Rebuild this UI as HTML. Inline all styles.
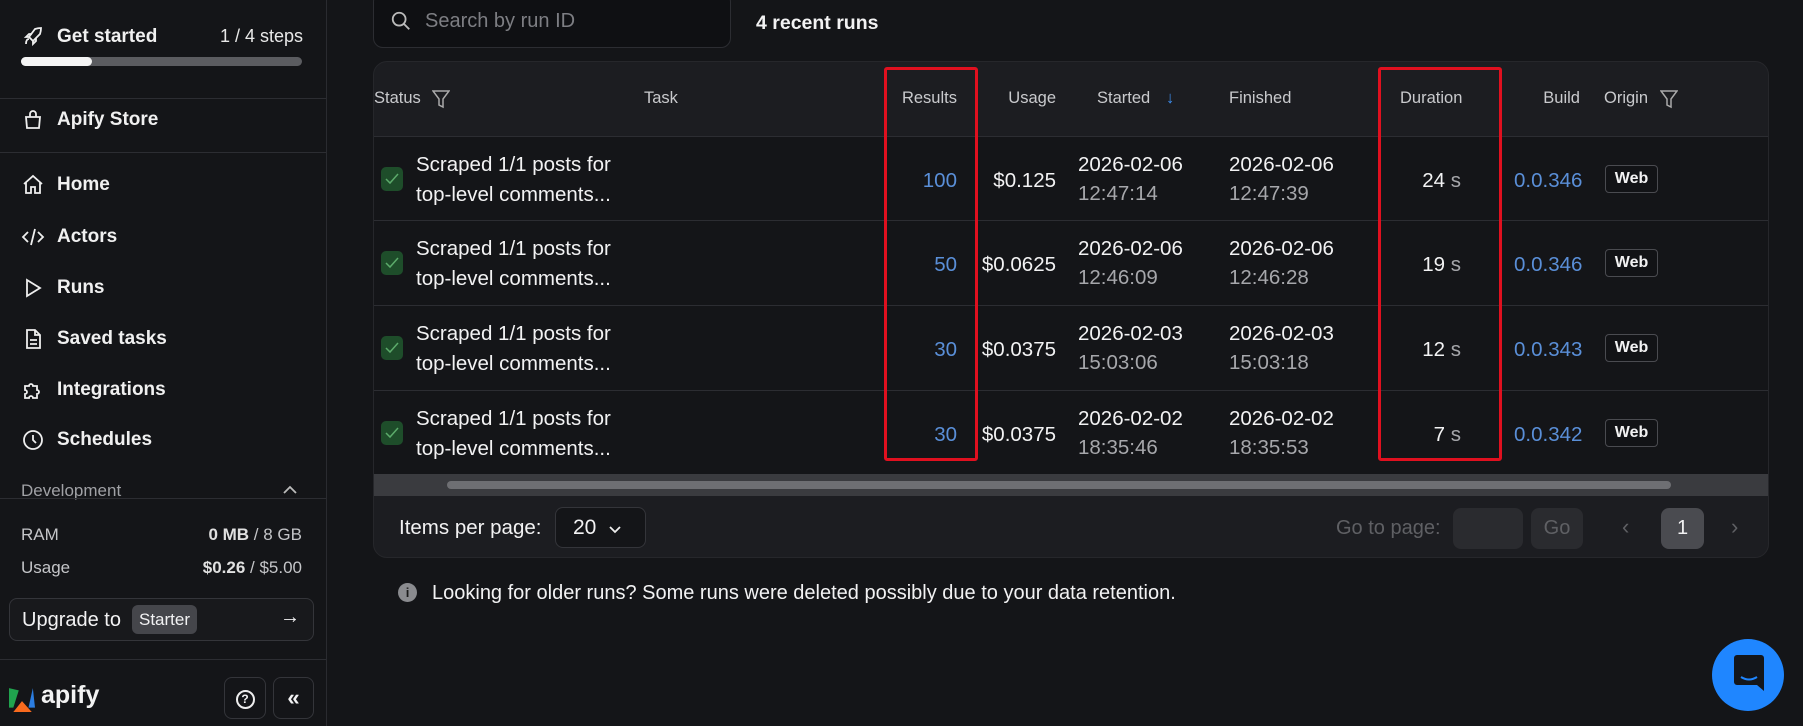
<!DOCTYPE html>
<html><head><meta charset="utf-8"><style>
*{box-sizing:border-box;margin:0;padding:0}
body{width:1803px;height:726px;background:#141518;font-family:"Liberation Sans",sans-serif;color:#f2f2f3;position:relative;overflow:hidden}
.a{position:absolute;white-space:nowrap}
.side{position:absolute;left:0;top:0;width:327px;height:726px;background:#141518;border-right:1px solid #2a2b30}
.hr{position:absolute;left:0;width:326px;height:1px;background:#2c2d32}
.nav{position:absolute;left:57px;font-size:19px;font-weight:bold;color:#f0f0f0;line-height:22px}
.ic{position:absolute;left:21px;width:24px;height:24px}
.card{position:absolute;left:373px;top:61px;width:1396px;height:497px;background:#1c1d21;border-radius:14px;border:1px solid #26272b;overflow:hidden}
.row{position:absolute;left:0;width:1396px;height:85px;background:#141518;border-top:1px solid #2c2d32}
.th{position:absolute;top:27px;font-size:16.5px;color:#c9cacd}
.t{position:absolute;font-size:20.5px;color:#f2f2f3;line-height:23px}
.sub{color:#a6a7ab}
.blue{color:#5a8fd8}
.chk{position:absolute;left:7px;top:30px;width:22px;height:24px;background:#1e4d2a;border-radius:5px}
.web{position:absolute;left:1231px;top:28px;width:53px;height:28px;border:1px solid #4a4b50;border-radius:4px;font-size:16px;font-weight:bold;text-align:center;line-height:26px;background:#121316}
.red{position:absolute;border:3px solid #e0101f;border-radius:3px}
</style></head><body>
<div class="side">
 <svg class="ic" style="top:25px" viewBox="0 0 24 24" fill="none" stroke="#eee" stroke-width="1.8"><path d="M5 19c0-3 1-5 3-5M14 4c3-1 6-1 6-1s0 3-1 6l-7 7-4-4 6-8zM8 12l-3 0 3-3h3M12 16v3l3-3v-3"/></svg>
 <div class="nav" style="top:26px">Get started</div>
 <div class="a" style="left:220px;top:26px;font-size:18px;color:#e8e8e8">1 / 4 steps</div>
 <div class="a" style="left:21px;top:57px;width:281px;height:9px;border-radius:5px;background:#5b5c60"></div>
 <div class="a" style="left:21px;top:57px;width:71px;height:9px;border-radius:5px;background:#f4f4f4"></div>
 <div class="hr" style="top:98px"></div>
 <svg class="ic" style="top:108px" viewBox="0 0 24 24" fill="none" stroke="#eee" stroke-width="1.8"><path d="M5 9h14l-1 11H6L5 9zM9 9V6a3 3 0 0 1 6 0v3"/></svg>
 <div class="nav" style="top:109px">Apify Store</div>
 <div class="hr" style="top:152px"></div>
 <svg class="ic" style="top:173px" viewBox="0 0 24 24" fill="none" stroke="#eee" stroke-width="1.8"><path d="M3 11l9-8 9 8M5 9v11h5v-6h4v6h5V9"/></svg>
 <div class="nav" style="top:174px">Home</div>
 <svg class="ic" style="top:225px" viewBox="0 0 24 24" fill="none" stroke="#eee" stroke-width="1.8"><path d="M7 7l-5 5 5 5M17 7l5 5-5 5M14 4l-4 16"/></svg>
 <div class="nav" style="top:226px">Actors</div>
 <svg class="ic" style="top:276px" viewBox="0 0 24 24" fill="none" stroke="#eee" stroke-width="1.8"><path d="M6 4l13 8-13 8z"/></svg>
 <div class="nav" style="top:277px">Runs</div>
 <svg class="ic" style="top:327px" viewBox="0 0 24 24" fill="none" stroke="#eee" stroke-width="1.8"><path d="M6 3h8l5 5v13H6zM14 3v5h5M9 13h7M9 17h7"/></svg>
 <div class="nav" style="top:328px">Saved tasks</div>
 <svg class="ic" style="top:378px" viewBox="0 0 24 24" fill="none" stroke="#eee" stroke-width="1.8"><path d="M4 8h4a2 2 0 1 1 4 0h4v4a2 2 0 1 1 0 4v4h-4a2 2 0 1 0-4 0H4v-4a2 2 0 1 0 0-4z"/></svg>
 <div class="nav" style="top:379px">Integrations</div>
 <svg class="ic" style="top:428px" viewBox="0 0 24 24" fill="none" stroke="#eee" stroke-width="1.8"><circle cx="12" cy="12" r="9"/><path d="M12 7v5l3 3"/></svg>
 <div class="nav" style="top:429px">Schedules</div>
 <div class="a" style="left:21px;top:481px;font-size:17px;color:#a0a1a5">Development</div>
 <svg class="a" style="left:282px;top:484px" width="16" height="12" viewBox="0 0 16 12" fill="none" stroke="#bbb" stroke-width="1.8"><path d="M2 9l6-6 6 6"/></svg>
 <div class="hr" style="top:498px"></div>
 <div class="a" style="left:21px;top:525px;font-size:17px;color:#c4c5c8">RAM</div>
 <div class="a" style="left:200px;top:525px;width:102px;text-align:right;font-size:17px;color:#c4c5c8"><b style="color:#e0e0e0">0 MB</b> / 8 GB</div>
 <div class="a" style="left:21px;top:558px;font-size:17px;color:#c4c5c8">Usage</div>
 <div class="a" style="left:160px;top:558px;width:142px;text-align:right;font-size:17px;color:#c4c5c8"><b style="color:#e0e0e0">$0.26</b> / $5.00</div>
 <div class="a" style="left:9px;top:598px;width:305px;height:43px;border:1px solid #34353a;border-radius:8px;background:#18191c"></div>
 <div class="a" style="left:22px;top:609px;font-size:20px">Upgrade to</div>
 <div class="a" style="left:132px;top:605px;width:65px;height:29px;background:#45464b;border-radius:6px;font-size:17px;line-height:29px;text-align:center">Starter</div>
 <div class="a" style="left:280px;top:606px;font-size:20px">→</div>
 <div class="hr" style="top:659px"></div>
 <svg class="a" style="left:9px;top:686px" width="26" height="26" viewBox="0 0 24 24"><path d="M0 2l9 2-5 16H0z" fill="#20a34e"/><path d="M22 2l2 18h-6z" fill="#2b7de0"/><path d="M4 24l8-10 9 10z" fill="#f86a1e"/></svg>
 <div class="a" style="left:41px;top:681px;font-size:25px;font-weight:bold;color:#f2f2f2">apify</div>
 <div class="a" style="left:224px;top:677px;width:42px;height:42px;border:1px solid #34353a;border-radius:8px;text-align:center;line-height:40px;font-size:18px"><span style="display:inline-block;width:19px;height:19px;border:2px solid #eee;border-radius:50%;font-size:12px;line-height:15px;font-weight:bold;vertical-align:middle">?</span></div>
 <div class="a" style="left:273px;top:677px;width:41px;height:42px;border:1px solid #34353a;border-radius:8px;text-align:center;line-height:40px;font-size:22px;font-weight:bold">«</div>
</div>

<div class="a" style="left:373px;top:-8px;width:358px;height:56px;border:1px solid #2c2d32;border-radius:10px;background:#0f1013"></div>
<svg class="a" style="left:390px;top:10px" width="22" height="22" viewBox="0 0 24 24" fill="none" stroke="#bbb" stroke-width="2"><circle cx="10" cy="10" r="7"/><path d="M15 15l6 6"/></svg>
<div class="a" style="left:425px;top:10px;font-size:20px;color:#7d7e83">Search by run ID</div>
<div class="a" style="left:756px;top:12px;font-size:19.5px;font-weight:bold">4 recent runs</div>

<div class="card">
 <div class="th" style="left:0">Status</div>
 <svg class="a" style="left:58px;top:27px" width="18" height="20" viewBox="0 0 18 20" fill="none" stroke="#aaa" stroke-width="1.5"><path d="M1 2h16l-6 8v8l-4-2v-6z"/></svg>
 <div class="th" style="left:270px">Task</div>
 <div class="th" style="left:500px;width:83px;text-align:right">Results</div>
 <div class="th" style="left:600px;width:82px;text-align:right">Usage</div>
 <div class="th" style="left:723px">Started</div>
 <div class="th" style="left:792px;color:#3d8ef0">↓</div>
 <div class="th" style="left:855px">Finished</div>
 <div class="th" style="left:1026px">Duration</div>
 <div class="th" style="left:1140px;width:66px;text-align:right">Build</div>
 <div class="th" style="left:1230px">Origin</div>
 <svg class="a" style="left:1286px;top:27px" width="18" height="20" viewBox="0 0 18 20" fill="none" stroke="#aaa" stroke-width="1.5"><path d="M1 2h16l-6 8v8l-4-2v-6z"/></svg>

 <div class="row" style="top:74px">
  <div class="chk"><svg width="22" height="24" viewBox="0 0 22 24" fill="none" stroke="#5cab6b" stroke-width="1.5"><path d="M5 12l4 4 8-9"/></svg></div>
  <div class="t" style="left:42px;top:16px">Scraped 1/1 posts for<br><span style="line-height:38px">top-level comments...</span></div>
  <div class="t blue" style="left:500px;top:32px;width:83px;text-align:right">100</div>
  <div class="t" style="left:580px;top:32px;width:102px;text-align:right">$0.125</div>
  <div class="t" style="left:704px;top:16px">2026-02-06</div><div class="t sub" style="left:704px;top:45px">12:47:14</div>
  <div class="t" style="left:855px;top:16px">2026-02-06</div><div class="t sub" style="left:855px;top:45px">12:47:39</div>
  <div class="t" style="left:1020px;top:32px;width:67px;text-align:right">24 <span class="sub">s</span></div>
  <div class="t blue" style="left:1140px;top:32px">0.0.346</div>
  <div class="web">Web</div>
 </div>
 <div class="row" style="top:158px">
  <div class="chk"><svg width="22" height="24" viewBox="0 0 22 24" fill="none" stroke="#5cab6b" stroke-width="1.5"><path d="M5 12l4 4 8-9"/></svg></div>
  <div class="t" style="left:42px;top:16px">Scraped 1/1 posts for<br><span style="line-height:38px">top-level comments...</span></div>
  <div class="t blue" style="left:500px;top:32px;width:83px;text-align:right">50</div>
  <div class="t" style="left:580px;top:32px;width:102px;text-align:right">$0.0625</div>
  <div class="t" style="left:704px;top:16px">2026-02-06</div><div class="t sub" style="left:704px;top:45px">12:46:09</div>
  <div class="t" style="left:855px;top:16px">2026-02-06</div><div class="t sub" style="left:855px;top:45px">12:46:28</div>
  <div class="t" style="left:1020px;top:32px;width:67px;text-align:right">19 <span class="sub">s</span></div>
  <div class="t blue" style="left:1140px;top:32px">0.0.346</div>
  <div class="web">Web</div>
 </div>
 <div class="row" style="top:243px">
  <div class="chk"><svg width="22" height="24" viewBox="0 0 22 24" fill="none" stroke="#5cab6b" stroke-width="1.5"><path d="M5 12l4 4 8-9"/></svg></div>
  <div class="t" style="left:42px;top:16px">Scraped 1/1 posts for<br><span style="line-height:38px">top-level comments...</span></div>
  <div class="t blue" style="left:500px;top:32px;width:83px;text-align:right">30</div>
  <div class="t" style="left:580px;top:32px;width:102px;text-align:right">$0.0375</div>
  <div class="t" style="left:704px;top:16px">2026-02-03</div><div class="t sub" style="left:704px;top:45px">15:03:06</div>
  <div class="t" style="left:855px;top:16px">2026-02-03</div><div class="t sub" style="left:855px;top:45px">15:03:18</div>
  <div class="t" style="left:1020px;top:32px;width:67px;text-align:right">12 <span class="sub">s</span></div>
  <div class="t blue" style="left:1140px;top:32px">0.0.343</div>
  <div class="web">Web</div>
 </div>
 <div class="row" style="top:328px">
  <div class="chk"><svg width="22" height="24" viewBox="0 0 22 24" fill="none" stroke="#5cab6b" stroke-width="1.5"><path d="M5 12l4 4 8-9"/></svg></div>
  <div class="t" style="left:42px;top:16px">Scraped 1/1 posts for<br><span style="line-height:38px">top-level comments...</span></div>
  <div class="t blue" style="left:500px;top:32px;width:83px;text-align:right">30</div>
  <div class="t" style="left:580px;top:32px;width:102px;text-align:right">$0.0375</div>
  <div class="t" style="left:704px;top:16px">2026-02-02</div><div class="t sub" style="left:704px;top:45px">18:35:46</div>
  <div class="t" style="left:855px;top:16px">2026-02-02</div><div class="t sub" style="left:855px;top:45px">18:35:53</div>
  <div class="t" style="left:1020px;top:32px;width:67px;text-align:right">7 <span class="sub">s</span></div>
  <div class="t blue" style="left:1140px;top:32px">0.0.342</div>
  <div class="web">Web</div>
 </div>
 <div class="a" style="left:0;top:412px;width:1396px;height:22px;background:#3a3b3f"></div>
 <div class="a" style="left:73px;top:419px;width:1224px;height:8px;border-radius:4px;background:#6e6f73"></div>
 <div class="a" style="left:25px;top:454px;font-size:20.5px">Items per page:</div>
 <div class="a" style="left:181px;top:445px;width:91px;height:41px;border:1px solid #34353a;border-radius:8px;background:#141518;font-size:21px;line-height:39px;padding-left:17px">20 <svg width="14" height="10" viewBox="0 0 14 10" fill="none" stroke="#eee" stroke-width="1.8" style="margin-left:6px"><path d="M2 3l5 5 5-5"/></svg></div>
 <div class="a" style="left:962px;top:455px;font-size:20px;color:#5f6064">Go to page:</div>
 <div class="a" style="left:1079px;top:446px;width:70px;height:41px;background:#2a2b2f;border-radius:8px"></div>
 <div class="a" style="left:1157px;top:446px;width:52px;height:41px;background:#2a2b2f;border-radius:8px;color:#5f6064;font-size:20px;text-align:center;line-height:41px">Go</div>
 <div class="a" style="left:1248px;top:452px;font-size:22px;color:#5f6064">‹</div>
 <div class="a" style="left:1287px;top:446px;width:43px;height:41px;background:#4a4b50;border-radius:8px;font-size:20px;text-align:center;line-height:41px">1</div>
 <div class="a" style="left:1357px;top:452px;font-size:22px;color:#5f6064">›</div>
</div>

<div class="red" style="left:884px;top:67px;width:94px;height:394px"></div>
<div class="red" style="left:1378px;top:67px;width:124px;height:394px"></div>

<div class="a" style="left:398px;top:583px;width:19px;height:19px;border-radius:50%;background:#8a8b8f;color:#1a1a1a;font-size:13px;font-weight:bold;text-align:center;line-height:19px">i</div>
<div class="a" style="left:432px;top:582px;font-size:20px">Looking for older runs? Some runs were deleted possibly due to your data retention.</div>

<div class="a" style="left:1712px;top:639px;width:72px;height:72px;border-radius:50%;background:#1f86ff"></div>
<svg class="a" style="left:1733px;top:654px" width="32" height="40" viewBox="0 0 32 40"><path d="M4 1h24a3 3 0 0 1 3 3v33l-7-6H4a3 3 0 0 1-3-3V4a3 3 0 0 1 3-3z" fill="#13161b"/><path d="M8 23q8 5 16 0" stroke="#1f86ff" stroke-width="2" fill="none"/></svg>
</body></html>
